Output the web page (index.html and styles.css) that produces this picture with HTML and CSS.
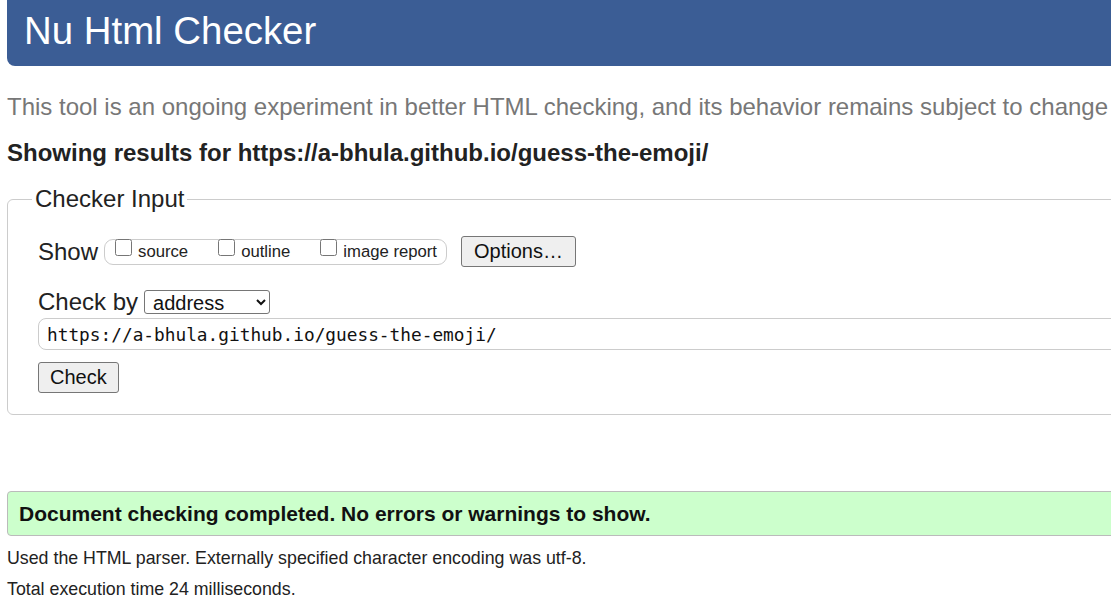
FILE: index.html
```html
<!DOCTYPE html>
<html lang="en">
<head>
    <meta charset="UTF-8">
    <meta name="viewport" content="width=device-width, initial-scale=1.0">
    <title>Showing results for https://a-bhula.github.io/guess-the-emoji/ - Nu Html Checker</title>
    <link rel="stylesheet" href="styles.css">
</head>
<body>
    <div class="page">
        <h1 class="banner">Nu Html Checker</h1>

        <p class="intro">This tool is an ongoing experiment in better HTML checking, and its behavior remains subject to change</p>

        <h2 class="results-for">Showing results for https://a-bhula.github.io/guess-the-emoji/</h2>

        <!-- Checker input form -->
        <fieldset class="checker">
            <legend>Checker Input</legend>

            <div class="show-row">
                <span class="row-label">Show</span>
                <span class="show-box">
                    <label><input type="checkbox"> source</label>
                    <label><input type="checkbox"> outline</label>
                    <label><input type="checkbox"> image report</label>
                </span>
                <button class="btn" type="button">Options…</button>
            </div>

            <div class="check-row">
                <span class="row-label">Check by</span>
                <select class="mode">
                    <option>address</option>
                </select>
            </div>

            <input class="doc-url" type="url" value="https://a-bhula.github.io/guess-the-emoji/">

            <button class="btn" type="button">Check</button>
        </fieldset>

        <!-- Results -->
        <p class="success">Document checking completed. No errors or warnings to show.</p>

        <p class="details">Used the HTML parser. Externally specified character encoding was utf-8.</p>
        <p class="details">Total execution time 24 milliseconds.</p>
    </div>
</body>
</html>
```

FILE: styles.css
```css
/* Global Styles */
html, body {
    margin: 0;
    padding: 0;
    overflow: hidden;
}

body {
    font-family: 'Liberation Sans', Arial, sans-serif;
    background-color: #fff;
    color: #222;
}

.page {
    width: 1300px;
    padding: 0 0 0 7px;
}

/* Header */
.banner {
    margin: 0;
    height: 66px;
    box-sizing: border-box;
    padding: 9px 0 0 17px;
    background-color: #3b5d95;
    color: #fff;
    font-size: 38.4px;
    font-weight: normal;
    line-height: 44px;
    border-radius: 0 0 8px 8px;
}

.intro {
    margin: 27px 0 0;
    font-size: 24px;
    line-height: 28px;
    color: #777;
    white-space: nowrap;
}

.results-for {
    margin: 18px 0 0;
    font-size: 24px;
    line-height: 28px;
    font-weight: bold;
    color: #222;
}

/* Checker Input */
.checker {
    margin: 18px 0 0;
    padding: 23px 30px 21px 30px;
    border: 1px solid #ccc;
    border-radius: 6px;
}

.checker legend {
    font-size: 24px;
    line-height: 28px;
    padding: 0 3px;
    margin-left: -6px;
    color: #222;
}

.show-row,
.check-row {
    display: flex;
    align-items: center;
}

.row-label {
    font-size: 24px;
    line-height: 28px;
    margin-right: 6px;
}

.show-box {
    display: inline-flex;
    align-items: center;
    gap: 30px;
    height: 26px;
    box-sizing: border-box;
    padding: 0 9px 0 10px;
    border: 1px solid #ccc;
    border-radius: 9px;
    font-size: 16.7px;
}

.show-box label {
    display: inline-flex;
    align-items: center;
}

.show-box input {
    width: 17px;
    height: 17px;
    margin: 0 6px 8px 0;
}

.btn {
    font-family: 'Liberation Sans', Arial, sans-serif;
    font-size: 20px;
    padding: 0 12px;
    height: 31px;
    border: 1px solid #767676;
    border-radius: 3px;
    background-color: #efefef;
    color: #111;
}

.show-row .btn {
    margin-left: 14px;
}

.checker > .btn {
    padding: 0 11px;
}

.check-row {
    margin-top: 21px;
}

.mode {
    font-family: 'Liberation Sans', Arial, sans-serif;
    font-size: 20px;
    width: 126px;
    height: 24px;
    padding: 0 0 0 4px;
    border: 1px solid #767676;
    border-radius: 3px;
    background-color: #fff;
    color: #111;
}

.doc-url {
    display: block;
    box-sizing: border-box;
    width: 100%;
    height: 32px;
    margin: 2px 0 12px;
    padding: 0 8px;
    font-family: 'DejaVu Sans Mono', 'Liberation Mono', monospace;
    font-size: 17.8px;
    border: 1px solid #ccc;
    border-radius: 8px;
    color: #111;
}

/* Results */
.success {
    margin: 76px 0 0;
    padding: 0 11px;
    height: 45px;
    line-height: 43px;
    box-sizing: border-box;
    background-color: #ccffcc;
    border: 1px solid #bbb;
    border-radius: 4px;
    font-size: 21px;
    font-weight: bold;
    color: #111;
}

.details {
    margin: 11px 0 0;
    font-size: 17.8px;
    line-height: 22px;
    color: #222;
}

.details + .details {
    margin-top: 9px;
}
```
